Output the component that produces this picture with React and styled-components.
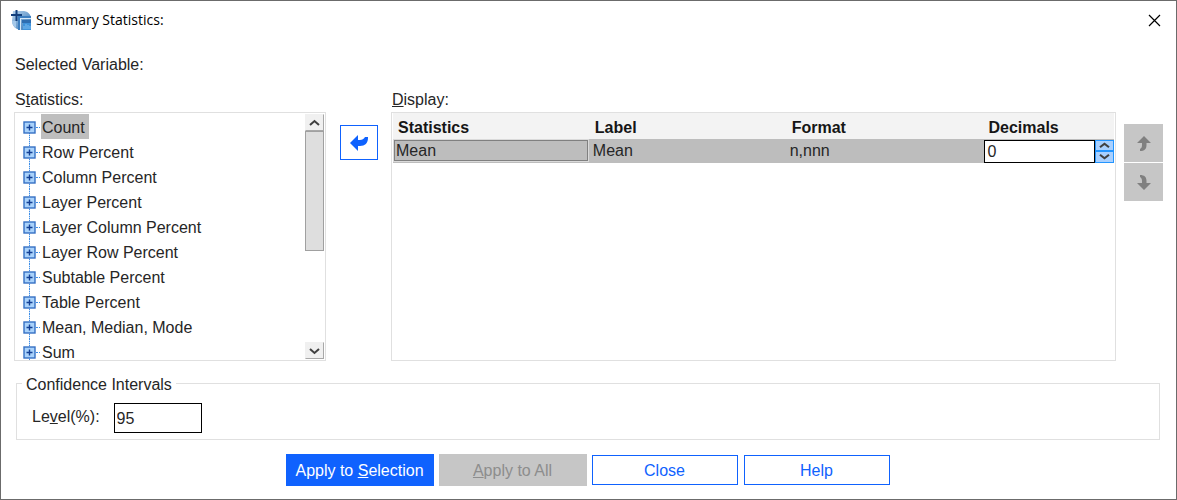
import React from 'react';
import styled, { createGlobalStyle } from 'styled-components';

const GlobalStyle = createGlobalStyle`
  *, *::before, *::after { box-sizing: border-box; }
  body {
    margin: 0;
    background: #ffffff;
    color: #262626;
    font-family: "Liberation Sans", Arial, sans-serif;
    font-size: 16px;
    line-height: 20px;
  }
  button, input { font: inherit; color: inherit; border-radius: 0; margin: 0; }
`;

const Dialog = styled.main`
  display: flex;
  flex-direction: column;
  min-height: 100vh;
  border: 1px solid #6b6b6b;
  background: #ffffff;
`;

const TitleBar = styled.header`
  display: flex;
  align-items: center;
  gap: 4px;
  height: 38px;
  padding: 0 15px 0 10px;
`;

const Title = styled.h1`
  flex: 1;
  margin: 0;
  color: #000000;
  font-family: "Open Sans", "Noto Sans", sans-serif;
  font-size: 14px;
  font-weight: 400;
  line-height: 20px;
`;

const CloseIconButton = styled.button`
  display: flex;
  padding: 0;
  border: 0;
  background: none;
  color: #000000;
`;

const SelectedVariable = styled.p`
  margin: 0;
  padding: 16px 14px 15px;
`;

const Main = styled.section`
  display: flex;
  padding: 0 13px;
`;

const Panel = styled.div`
  display: flex;
  flex-direction: column;
  flex: ${(p) => (p.$width ? `0 0 ${p.$width}` : '1 1 0')};
  min-width: 0;
`;

const PanelLabel = styled.h2`
  margin: 0;
  padding: 0 1px;
  height: 22px;
  font-size: 16px;
  font-weight: 400;
  line-height: 20px;
`;

const Frame = styled.div`
  display: flex;
  height: 249px;
  border: 1px solid #e0e0e0;
  background: #ffffff;
`;

const Tree = styled.ul`
  flex: 1;
  margin: 0;
  padding: 1px 0 0 8px;
  overflow: hidden;
  list-style: none;
`;

const TreeItem = styled.li`
  display: flex;
  align-items: center;
  height: 25px;
`;

const Toggle = styled.button`
  display: flex;
  flex: none;
  padding: 0;
  border: 0;
  background: none;
`;

const TreeLabel = styled.span`
  padding: 3px 4px 1px 1px;
  line-height: 21px;
  background: ${(p) => (p.$selected ? '#bebebe' : 'transparent')};
`;

const ScrollBar = styled.div`
  display: flex;
  flex-direction: column;
  width: 20px;
  padding: 1px 1px 1px 0;
`;

const ScrollButton = styled.button`
  display: flex;
  align-items: center;
  justify-content: center;
  height: 17px;
  padding: 0;
  border: 1px solid;
  border-color: #f0f0f0 #a8a8a8 #a8a8a8 #f0f0f0;
  background: #f0f0f0;
  color: #404040;
`;

const ScrollTrack = styled.div`
  flex: 1;
  background: #ffffff;
`;

const ScrollThumb = styled.div`
  height: 120px;
  border: 1px solid #a0a0a0;
  background: #dedede;
`;

const MoveColumn = styled.div`
  display: flex;
  flex-direction: column;
  gap: 1px;
  padding: ${(p) => (p.$side === 'left' ? '35px 13px 0 14px' : '34px 0 0 8px')};
`;

const MoveButton = styled.button`
  display: flex;
  align-items: center;
  justify-content: center;
  width: 38px;
  height: 35px;
  padding: 0;
  border: 1px solid #0f62fe;
  background: #ffffff;
  color: #0f62fe;
`;

const OrderButton = styled(MoveButton)`
  width: 39px;
  height: 38px;
  border: 0;
  background: #c6c6c6;
  color: #808080;
`;

const Table = styled.table`
  align-self: flex-start;
  width: 100%;
  margin: 0 1px;
  border-spacing: 0;
  table-layout: fixed;
`;

const HeadCell = styled.th`
  width: ${(p) => p.$width};
  height: 26px;
  padding: 4px 5px 0;
  background: #f3f3f3;
  color: #161616;
  font-weight: 700;
  text-align: left;
`;

const Cell = styled.td`
  height: 24px;
  padding: 0;
  background: #bdbdbd;
`;

const CellText = styled.div`
  height: 21px;
  margin: 0 2px 2px 1px;
  padding: 0 1px;
  border: 1px solid ${(p) => (p.$focused ? '#808080' : 'transparent')};
  outline: 1px solid ${(p) => (p.$focused ? '#dadada' : 'transparent')};
  line-height: 20px;
`;

const Spinner = styled.div`
  display: flex;
  height: 23px;
  padding-left: 1px;
`;

const TextInput = styled.input`
  width: ${(p) => p.$width || '100%'};
  min-width: 0;
  height: ${(p) => p.$height};
  padding: 1px 2px 0;
  border: 1px solid #000000;
  background: #ffffff;
`;

const SpinButtons = styled.div`
  display: flex;
  flex-direction: column;
  flex: none;
  width: 19px;
`;

const SpinButton = styled.button`
  display: flex;
  flex: 1;
  align-items: center;
  justify-content: center;
  min-height: 0;
  padding: 0;
  border: 1px solid #2395ff;
  background: #a8d0ff;
  color: #404040;
`;

const Confidence = styled.fieldset`
  height: 67px;
  margin: 12px 16px 0 15px;
  padding: 0 0 0 15px;
  border: 1px solid #e0e0e0;
`;

const Legend = styled.legend`
  margin-left: -10px;
  padding: 2px 4px 0;
  height: 21px;
`;

const LevelRow = styled.div`
  display: flex;
  align-items: center;
  gap: 14px;
  padding-top: 9px;
`;

const LevelLabel = styled.label`
  padding-bottom: 3px;
`;

const Actions = styled.footer`
  display: flex;
  justify-content: center;
  gap: 5px;
  padding: 14px 1px 12px 0;
`;

const ActionButton = styled.button`
  width: 148px;
  height: 32px;
  padding: 2px 0 0;
  border: 0;
  background: ${(p) => (p.$primary ? '#0f62fe' : '#c6c6c6')};
  color: ${(p) => (p.$primary ? '#ffffff' : '#8d8d8d')};
`;

const OutlineButton = styled(ActionButton)`
  width: 146px;
  height: 30px;
  margin: 1px 1px 1px 0;
  border: 1px solid #0f62fe;
  background: #ffffff;
  color: #0f62fe;
`;

const AppIcon = () => (
  <svg width="21" height="21" viewBox="0 0 21 21" aria-hidden="true">
    <defs>
      <linearGradient id="globe" x1="0" y1="0" x2="1" y2="1">
        <stop offset="0" stopColor="#b7d3ec" />
        <stop offset="1" stopColor="#2f73b5" />
      </linearGradient>
    </defs>
    <path d="M2 1h11c5 1 7 4 7 8v11H11C5 20 1 16 1 11z" fill="url(#globe)" />
    <path d="M1 11h4v7c-2-1-4-4-4-7z" fill="#a5c9ea" />
    <path d="M7 6h13v2H9v12H7z" fill="#3d7fc0" />
    <path d="M9 8h11v1H10v11H9z" fill="#d6e8f7" />
    <path d="M11 10h9v3h-9z" fill="#2e6db0" />
    <path d="M12 13h8v7h-8z" fill="#3f92da" />
    <path d="M13 19v-3M15 19v-5M17 19v-4M19 19v-3" stroke="#7cbcf0" />
    <path d="M5.500 0v11M0 5h11" stroke="#123f7c" strokeWidth="2" />
  </svg>
);

const CloseIcon = () => (
  <svg width="13" height="13" viewBox="0 0 13 13" aria-hidden="true">
    <path d="M1 1l11 11M12 1L1 12" stroke="currentColor" strokeWidth="1.2" />
  </svg>
);

const ExpandIcon = ({ first }) => (
  <svg width="18" height="25" viewBox="0 0 18 25" aria-hidden="true">
    <path
      d={first ? 'M6.500 19v6' : 'M6.500 0v25'}
      stroke="#3d8ee8"
      strokeDasharray="1.300 0.700"
    />
    <path d="M13 13.500h4" stroke="#3d8ee8" strokeDasharray="2 1" />
    <rect x="1" y="8" width="11" height="11" fill="#a9d2fb" stroke="#3570c4" strokeWidth="1.400" />
    <path d="M3.500 13.500h6M6.500 10.500v6" stroke="#123f94" strokeWidth="1.400" />
  </svg>
);

const Chevron = ({ down, small }) => (
  <svg width="11" height={small ? 7 : 8} viewBox="0 0 11 8" preserveAspectRatio="none" aria-hidden="true">
    <path
      d={down ? 'M1 2l4.500 4 4.500-4' : 'M1 6l4.500-4 4.500 4'}
      fill="none"
      stroke="currentColor"
      strokeWidth="2"
    />
  </svg>
);

const MoveArrow = () => (
  <svg width="18" height="16" viewBox="0 0 18 16" aria-hidden="true">
    <path d="M0 8l8-8v5h2c2 0 4-1 5-3h3v1c0 5-3 8-8 8H8v5z" fill="currentColor" />
  </svg>
);

const OrderArrow = ({ down }) => (
  <svg width="14" height="15" viewBox="0 0 14 15" aria-hidden="true">
    <path
      transform={down ? 'translate(0 15) scale(1 -1)' : undefined}
      d="M7 0l7 7H9.500v2c0 4-2 6-6.500 6v-2c1.500-1 2-2 2-4V7H0z"
      fill="currentColor"
    />
  </svg>
);

const statistics = [
  'Count',
  'Row Percent',
  'Column Percent',
  'Layer Percent',
  'Layer Column Percent',
  'Layer Row Percent',
  'Subtable Percent',
  'Table Percent',
  'Mean, Median, Mode',
  'Sum',
];

export default function App() {
  return (
    <>
      <GlobalStyle />
      <Dialog>
        <TitleBar>
          <AppIcon />
          <Title>Summary Statistics:</Title>
          <CloseIconButton aria-label="Close window">
            <CloseIcon />
          </CloseIconButton>
        </TitleBar>
        <SelectedVariable>Selected Variable:</SelectedVariable>
        <Main>
          <Panel $width="312px">
            <PanelLabel>S<u>t</u>atistics:</PanelLabel>
            <Frame>
              <Tree>
                {statistics.map((name, i) => (
                  <TreeItem key={name}>
                    <Toggle aria-label={`Expand ${name}`}>
                      <ExpandIcon first={i === 0} />
                    </Toggle>
                    <TreeLabel $selected={i === 0}>{name}</TreeLabel>
                  </TreeItem>
                ))}
              </Tree>
              <ScrollBar>
                <ScrollButton aria-label="Scroll up"><Chevron /></ScrollButton>
                <ScrollTrack><ScrollThumb /></ScrollTrack>
                <ScrollButton aria-label="Scroll down"><Chevron down /></ScrollButton>
              </ScrollBar>
            </Frame>
          </Panel>
          <MoveColumn $side="left">
            <MoveButton aria-label="Remove from display"><MoveArrow /></MoveButton>
          </MoveColumn>
          <Panel>
            <PanelLabel><u>D</u>isplay:</PanelLabel>
            <Frame>
              <Table>
                <thead>
                  <tr>
                    <HeadCell $width="27.3%">Statistics</HeadCell>
                    <HeadCell $width="27.3%">Label</HeadCell>
                    <HeadCell $width="27.3%">Format</HeadCell>
                    <HeadCell>Decimals</HeadCell>
                  </tr>
                </thead>
                <tbody>
                  <tr>
                    <Cell><CellText $focused>Mean</CellText></Cell>
                    <Cell><CellText>Mean</CellText></Cell>
                    <Cell><CellText>n,nnn</CellText></Cell>
                    <Cell>
                      <Spinner>
                        <TextInput $height="23px" aria-label="Decimals" defaultValue="0" />
                        <SpinButtons>
                          <SpinButton aria-label="Increase"><Chevron small /></SpinButton>
                          <SpinButton aria-label="Decrease"><Chevron small down /></SpinButton>
                        </SpinButtons>
                      </Spinner>
                    </Cell>
                  </tr>
                </tbody>
              </Table>
            </Frame>
          </Panel>
          <MoveColumn $side="right">
            <OrderButton disabled aria-label="Move up"><OrderArrow /></OrderButton>
            <OrderButton disabled aria-label="Move down"><OrderArrow down /></OrderButton>
          </MoveColumn>
        </Main>
        <Confidence>
          <Legend>Confidence Intervals</Legend>
          <LevelRow>
            <LevelLabel htmlFor="level">Le<u>v</u>el(%):</LevelLabel>
            <TextInput id="level" $width="88px" $height="30px" defaultValue="95" />
          </LevelRow>
        </Confidence>
        <Actions>
          <ActionButton $primary>Apply to <u>S</u>election</ActionButton>
          <ActionButton disabled><u>A</u>pply to All</ActionButton>
          <OutlineButton>Close</OutlineButton>
          <OutlineButton>Help</OutlineButton>
        </Actions>
      </Dialog>
    </>
  );
}
